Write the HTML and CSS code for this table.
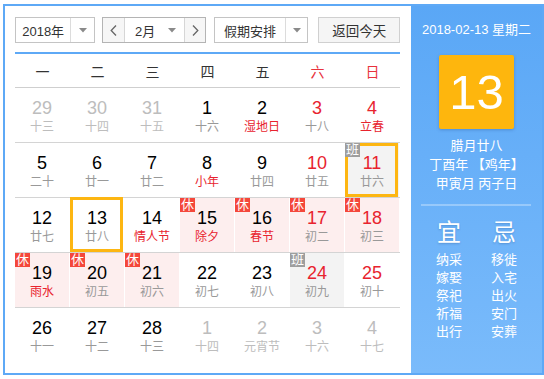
FILE: index.html
```html
<!DOCTYPE html>
<html lang="zh">
<head>
<meta charset="utf-8">
<title>万年历</title>
<link rel="stylesheet" href="styles.css">
</head>
<body>
<div class="cal">
  <div class="main">
    <div class="toolbar">
      <div class="sel year">
        <span class="val">2018年</span>
        <span class="arr"><svg width="8" height="5" viewBox="0 0 8 5"><path d="M0 0H8L4 4.5Z" fill="#8a8a8a"/></svg></span>
      </div>
      <div class="month">
        <span class="nav prev"><svg width="7" height="11" viewBox="0 0 7 11"><path d="M6 0.5L1.2 5.5L6 10.5" fill="none" stroke="#666" stroke-width="1.3"/></svg></span>
        <span class="mval"><span class="mtxt">2月</span><svg width="8" height="5" viewBox="0 0 8 5"><path d="M0 0H8L4 4.5Z" fill="#8a8a8a"/></svg></span>
        <span class="nav next"><svg width="7" height="11" viewBox="0 0 7 11"><path d="M1 0.5L5.8 5.5L1 10.5" fill="none" stroke="#666" stroke-width="1.3"/></svg></span>
      </div>
      <div class="sel hol">
        <span class="val">假期安排</span>
        <span class="arr"><svg width="8" height="5" viewBox="0 0 8 5"><path d="M0 0H8L4 4.5Z" fill="#8a8a8a"/></svg></span>
      </div>
      <button class="today">返回今天</button>
    </div>

    <div class="table">
      <div class="head">
        <span>一</span><span>二</span><span>三</span><span>四</span><span>五</span><span class="red">六</span><span class="red">日</span>
      </div>

      <div class="week">
        <div class="day other"><b>29</b><i>十三</i></div>
        <div class="day other"><b>30</b><i>十四</i></div>
        <div class="day other"><b>31</b><i>十五</i></div>
        <div class="day"><b>1</b><i>十六</i></div>
        <div class="day"><b>2</b><i class="fest">湿地日</i></div>
        <div class="day we"><b>3</b><i>十八</i></div>
        <div class="day we"><b>4</b><i class="fest">立春</i></div>
      </div>

      <div class="week">
        <div class="day"><b>5</b><i>二十</i></div>
        <div class="day"><b>6</b><i>廿一</i></div>
        <div class="day"><b>7</b><i>廿二</i></div>
        <div class="day"><b>8</b><i class="fest">小年</i></div>
        <div class="day"><b>9</b><i>廿四</i></div>
        <div class="day we"><b>10</b><i>廿五</i></div>
        <div class="day we work hover"><span class="tag ban">班</span><b>11</b><i>廿六</i></div>
      </div>

      <div class="week">
        <div class="day"><b>12</b><i>廿七</i></div>
        <div class="day sel-day"><b>13</b><i>廿八</i></div>
        <div class="day"><b>14</b><i class="fest">情人节</i></div>
        <div class="day rest"><span class="tag xiu">休</span><b>15</b><i class="fest">除夕</i></div>
        <div class="day rest"><span class="tag xiu">休</span><b>16</b><i class="fest">春节</i></div>
        <div class="day rest we"><span class="tag xiu">休</span><b>17</b><i>初二</i></div>
        <div class="day rest we"><span class="tag xiu">休</span><b>18</b><i>初三</i></div>
      </div>

      <div class="week">
        <div class="day rest"><span class="tag xiu">休</span><b>19</b><i class="fest">雨水</i></div>
        <div class="day rest"><span class="tag xiu">休</span><b>20</b><i>初五</i></div>
        <div class="day rest"><span class="tag xiu">休</span><b>21</b><i>初六</i></div>
        <div class="day"><b>22</b><i>初七</i></div>
        <div class="day"><b>23</b><i>初八</i></div>
        <div class="day we work"><span class="tag ban">班</span><b>24</b><i>初九</i></div>
        <div class="day we"><b>25</b><i>初十</i></div>
      </div>

      <div class="week last">
        <div class="day"><b>26</b><i>十一</i></div>
        <div class="day"><b>27</b><i>十二</i></div>
        <div class="day"><b>28</b><i>十三</i></div>
        <div class="day other"><b>1</b><i>十四</i></div>
        <div class="day other"><b>2</b><i>元宵节</i></div>
        <div class="day other"><b>3</b><i>十六</i></div>
        <div class="day other"><b>4</b><i>十七</i></div>
      </div>
    </div>
  </div>

  <div class="side">
    <div class="date">2018-02-13 星期二</div>
    <div class="bigday">13</div>
    <div class="lunar">
      <div>腊月廿八</div>
      <div>丁酉年 【鸡年】</div>
      <div>甲寅月 丙子日</div>
    </div>
    <div class="sep"></div>
    <div class="yiji">
      <div class="col">
        <div class="ttl">宜</div>
        <div>纳采</div><div>嫁娶</div><div>祭祀</div><div>祈福</div><div>出行</div>
      </div>
      <div class="col">
        <div class="ttl">忌</div>
        <div>移徙</div><div>入宅</div><div>出火</div><div>安门</div><div>安葬</div>
      </div>
    </div>
  </div>
</div>
</body>
</html>
```

FILE: styles.css
```css
* { box-sizing: border-box; }

html, body {
  margin: 0;
  padding: 0;
  background: #fff;
}

body {
  font-family: "Liberation Sans", "Noto Sans CJK SC", Arial, sans-serif;
  color: #333;
}

.cal {
  margin: 4px 0 0 3px;
  width: 541px;
  height: 371px;
  border: 2px solid #5ea9f6;
  display: flex;
}

.main {
  width: 406px;
  padding: 11px 11px 0 10px;
}

/* toolbar */
.toolbar {
  display: flex;
  height: 26px;
  font-size: 13px;
  color: #333;
}

.sel {
  display: flex;
  height: 26px;
  border: 1px solid #c4c4c4;
  background: #fff;
}

.sel .val {
  display: flex;
  align-items: center;
  justify-content: center;
}

.sel .arr {
  display: flex;
  align-items: center;
  justify-content: center;
  border-left: 1px solid #dcdcdc;
}

.year { width: 80px; }
.year .val { width: 55px; }
.year .arr { width: 24px; }

.month {
  display: flex;
  margin-left: 7px;
  width: 105px;
  height: 26px;
  border: 1px solid #b4b4b4;
}

.nav {
  display: flex;
  align-items: center;
  justify-content: center;
  background: #f6f6f6;
}

.prev { width: 22px; border-right: 1px solid #d6d6d6; }
.next { width: 21px; border-left: 1px solid #d6d6d6; }

.mval {
  flex: 1;
  display: flex;
  align-items: center;
  padding-left: 10px;
  background: #fff;
}

.mtxt { width: 33px; }

.hol { margin-left: 8px; width: 94px; }
.hol .val { width: 70px; }
.hol .arr { width: 23px; }

.today {
  margin-left: 10px;
  width: 82px;
  height: 26px;
  padding: 0;
  border: 1px solid #d0d0d0;
  background: #f5f5f5;
  font: inherit;
  font-size: 13.5px;
  color: #333;
}

/* table */
.table {
  margin-top: 9px;
  border-top: 2px solid #5ea9f6;
}

.head {
  display: grid;
  grid-template-columns: repeat(7, 55px);
  height: 34px;
  border-bottom: 1px solid #cfcfcf;
}

.head span {
  display: flex;
  align-items: center;
  justify-content: center;
  font-size: 14px;
  color: #333;
}

.head .red { color: #e8323c; }

.week {
  display: grid;
  grid-template-columns: repeat(7, 55px);
  height: 55px;
  border-bottom: 1px solid #d4d4d4;
}

.week.last { border-bottom: 0; }

.day {
  position: relative;
  display: flex;
  flex-direction: column;
  align-items: center;
  padding-top: 10px;
  border-right: 1px solid #fff;
}

.day b {
  font-weight: normal;
  font-size: 18px;
  line-height: 20px;
  color: #000;
  font-family: "Liberation Sans", Arial, sans-serif;
}

.day i {
  font-style: normal;
  font-size: 12px;
  line-height: 18px;
  color: #999;
}

.day.we b { color: #e8232e; }
.day i.fest { color: #e8232e; }

.day.other b { color: #bdbdbd; }
.day.other i { color: #bdbdbd; }

.day.rest { background: #fdeeee; }
.day.work { background: #f3f3f3; }

.tag {
  position: absolute;
  left: 0;
  top: 0;
  z-index: 2;
  width: 15px;
  height: 14px;
  font-size: 13px;
  line-height: 14px;
  text-align: center;
  color: #fff;
}

.tag.xiu { background: #f4473b; }
.tag.ban { background: #9e9e9e; }

.sel-day::after,
.hover::after {
  content: "";
  position: absolute;
  left: 0;
  right: 1px;
  top: -1px;
  bottom: 0;
  border: 3px solid #fdb612;
}

.hover::after { top: 0; bottom: 0; }

/* side panel */
.side {
  width: 131px;
  background: linear-gradient(#5aa7f6, #7abbfb);
  color: #fff;
  padding-top: 15px;
  display: flex;
  flex-direction: column;
  align-items: center;
}

.date {
  font-size: 13px;
  line-height: 18px;
}

.bigday {
  margin-top: 16px;
  width: 75px;
  height: 74px;
  border-radius: 2px;
  background: #feb60d;
  box-shadow: 0 1px 3px rgba(40, 80, 140, 0.35);
  font-size: 49px;
  line-height: 74px;
  text-align: center;
  color: #fff;
}

.lunar {
  margin-top: 7px;
  font-size: 13px;
  line-height: 19px;
  text-align: center;
}

.sep {
  margin-top: 11px;
  width: 110px;
  height: 2px;
  background: rgba(255, 255, 255, 0.3);
  align-self: flex-start;
  margin-left: 10px;
}

.yiji {
  margin-top: 12px;
  display: flex;
  justify-content: center;
}

.col {
  width: 55px;
  text-align: center;
  font-size: 13px;
  line-height: 18px;
}

.col .ttl {
  font-size: 24px;
  line-height: 30px;
  margin-bottom: 3px;
  text-shadow: 0 1px 2px rgba(30, 70, 130, 0.3);
}
```
